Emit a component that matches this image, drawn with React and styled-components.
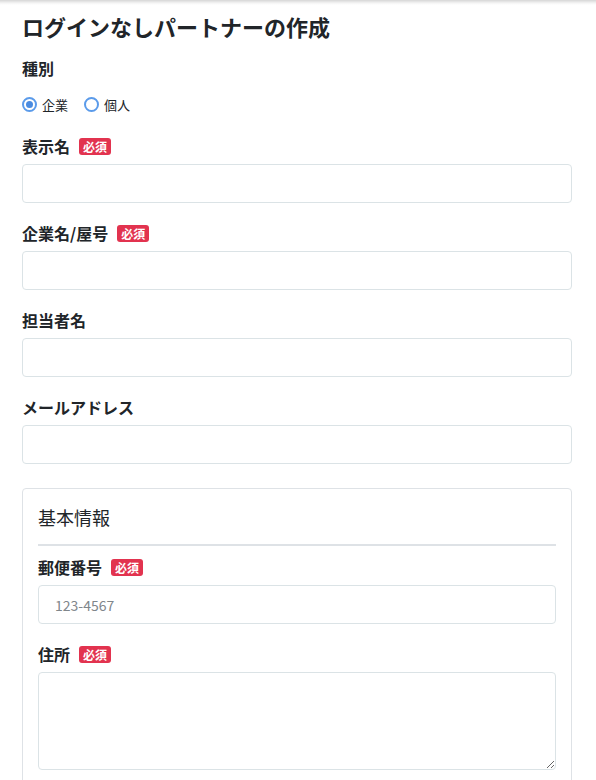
import React from 'react'
import styled, { createGlobalStyle } from 'styled-components'

const GlobalStyle = createGlobalStyle`
  * { box-sizing: border-box; }
  body {
    margin: 0;
    font-family: "Noto Sans CJK JP", "Noto Sans", sans-serif;
    color: #212529;
    background: #fff;
  }
`

const Page = styled.div`
  padding: 12px 24px 40px 22px;
  background: linear-gradient(#d6d6d6, #f4f4f4 3px, #fff 5px);
  min-height: 780px;
`

const Title = styled.h1`
  margin: 0 0 18px;
  font-size: 22px;
  line-height: 28px;
  font-weight: 700;
  color: #212529;
`

const Label = styled.div`
  display: flex;
  align-items: center;
  gap: 9px;
  font-size: 16px;
  font-weight: 700;
  line-height: 20px;
  margin-bottom: ${p => p.$gap || 8}px;
`

const Badge = styled.span`
  display: inline-block;
  background: #e2334f;
  color: #fff;
  font-size: 12px;
  font-weight: 700;
  line-height: 17px;
  padding: 0 4px;
  border-radius: 3px;
`

const RadioRow = styled.div`
  display: flex;
  align-items: center;
  gap: 16px;
  margin-bottom: 22px;
  height: 20px;
`

const RadioItem = styled.label`
  display: flex;
  align-items: center;
  gap: 5px;
  font-size: 13px;
`

const Circle = styled.span`
  width: 15px;
  height: 15px;
  border-radius: 50%;
  border: 2px solid #5b9bea;
  display: flex;
  align-items: center;
  justify-content: center;
  &::after {
    content: '';
    width: 7px;
    height: 7px;
    border-radius: 50%;
    background: ${p => (p.$checked ? '#4a8be0' : 'transparent')};
  }
`

const Group = styled.div`
  margin-bottom: 20px;
`

const Input = styled.input`
  display: block;
  width: 100%;
  height: 39px;
  border: 1px solid #dbe3e6;
  border-radius: 4px;
  padding: 0 16px;
  font-size: 14px;
  font-family: inherit;
  &::placeholder { color: #80868b; }
`

const TextArea = styled.textarea`
  display: block;
  width: 100%;
  height: 98px;
  border: 1px solid #dbe3e6;
  border-radius: 4px;
  padding: 8px 16px;
  font-size: 14px;
  font-family: inherit;
`

const Card = styled.div`
  margin-top: 24px;
  border: 1px solid #dee2e6;
  border-radius: 4px;
  padding: 14px 15px 20px;
`

const CardTitle = styled.div`
  font-size: 18px;
  line-height: 28px;
  padding-bottom: 13px;
  border-bottom: 2px solid #dee2e6;
  margin-bottom: 11px;
`

const Field = ({ label, required, children }) => (
  <Group>
    <Label>
      {label}
      {required && <Badge>必須</Badge>}
    </Label>
    {children}
  </Group>
)

export default function App() {
  return (
    <>
      <GlobalStyle />
      <Page>
        <Title>ログインなしパートナーの作成</Title>
        <Label $gap={16}>種別</Label>
        <RadioRow>
          <RadioItem><Circle $checked />企業</RadioItem>
          <RadioItem><Circle />個人</RadioItem>
        </RadioRow>
        <Field label="表示名" required><Input /></Field>
        <Field label="企業名/屋号" required><Input /></Field>
        <Field label="担当者名"><Input /></Field>
        <Field label="メールアドレス"><Input /></Field>
        <Card>
          <CardTitle>基本情報</CardTitle>
          <Field label="郵便番号" required><Input placeholder="123-4567" /></Field>
          <Field label="住所" required><TextArea /></Field>
        </Card>
      </Page>
    </>
  )
}
